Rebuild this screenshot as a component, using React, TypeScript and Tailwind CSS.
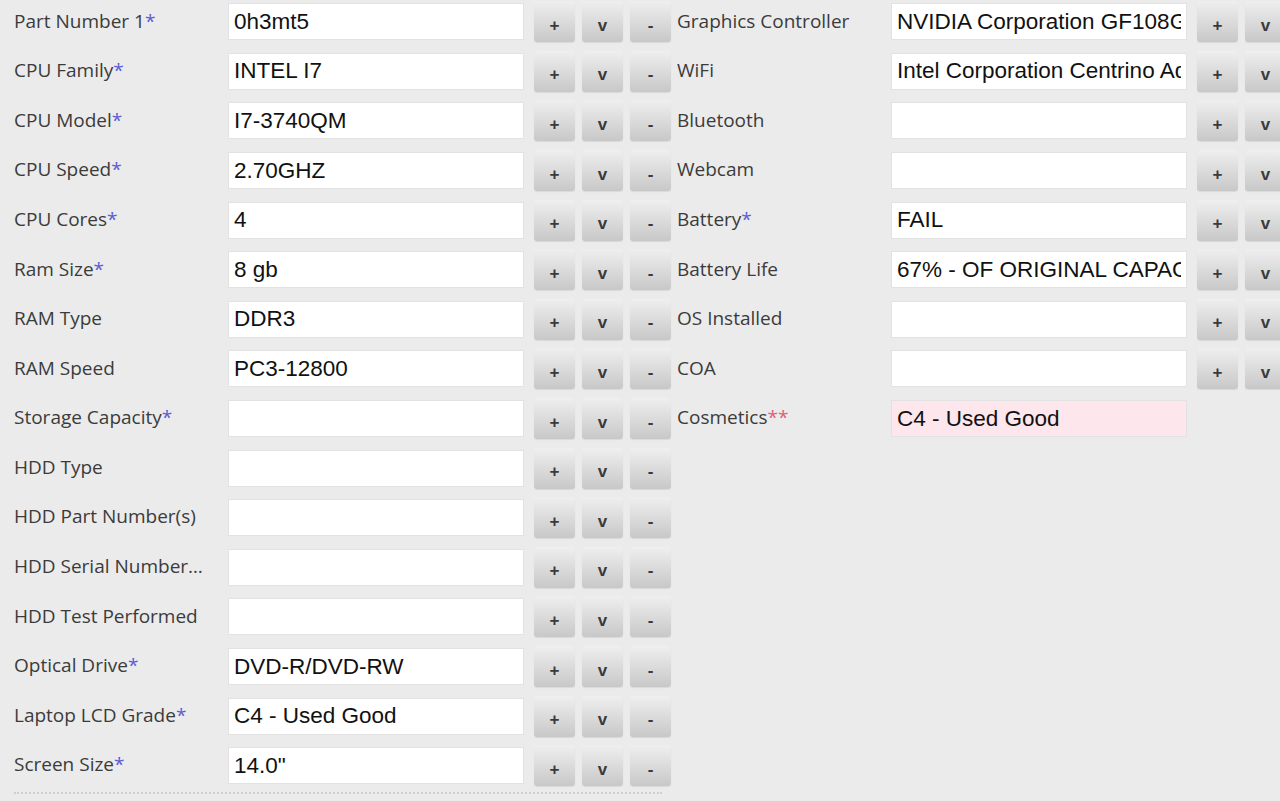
import React from "react";

type Field = {
  label: string;
  req?: "one" | "two";
  value?: string;
  pink?: boolean;
  noButtons?: boolean;
};

const leftFields: Field[] = [
  { label: "Part Number 1", req: "one", value: "0h3mt5" },
  { label: "CPU Family", req: "one", value: "INTEL I7" },
  { label: "CPU Model", req: "one", value: "I7-3740QM" },
  { label: "CPU Speed", req: "one", value: "2.70GHZ" },
  { label: "CPU Cores", req: "one", value: "4" },
  { label: "Ram Size", req: "one", value: "8 gb" },
  { label: "RAM Type", value: "DDR3" },
  { label: "RAM Speed", value: "PC3-12800" },
  { label: "Storage Capacity", req: "one", value: "" },
  { label: "HDD Type", value: "" },
  { label: "HDD Part Number(s)", value: "" },
  { label: "HDD Serial Number(s)", value: "" },
  { label: "HDD Test Performed", value: "" },
  { label: "Optical Drive", req: "one", value: "DVD-R/DVD-RW" },
  { label: "Laptop LCD Grade", req: "one", value: "C4 - Used Good" },
  { label: "Screen Size", req: "one", value: '14.0"' },
];

const rightFields: Field[] = [
  { label: "Graphics Controller", value: "NVIDIA Corporation GF108GLM [NVS 5200M]" },
  { label: "WiFi", value: "Intel Corporation Centrino Advanced-N 6205" },
  { label: "Bluetooth", value: "" },
  { label: "Webcam", value: "" },
  { label: "Battery", req: "one", value: "FAIL" },
  { label: "Battery Life", value: "67% - OF ORIGINAL CAPACITY" },
  { label: "OS Installed", value: "" },
  { label: "COA", value: "" },
  { label: "Cosmetics", req: "two", value: "C4 - Used Good", pink: true, noButtons: true },
];

function ActionButton({ glyph }: { glyph: string }) {
  return (
    <button
      type="button"
      className="flex h-[41px] w-[41px] shrink-0 items-center justify-center rounded-[3px] bg-gradient-to-b from-[#efefef] to-[#c8c8c8] pt-[7px] text-[17px] font-bold leading-none text-[#3a3a3a] shadow-[0_1px_1px_rgba(0,0,0,0.08)]"
      style={{ fontFamily: "'Liberation Sans', Arial, sans-serif" }}
    >
      {glyph}
    </button>
  );
}

function FieldRow({ f }: { f: Field }) {
  return (
    <div className="flex h-[49.6px] items-center">
      <div
        className="w-[192px] shrink-0 truncate pb-[2px] text-[19px] text-[#3b3b3b]"
        style={{ fontFamily: "'Open Sans', 'Noto Sans', sans-serif" }}
      >
        {f.label}
        {f.req === "one" && <span className="text-[#5b5bd6]">*</span>}
        {f.req === "two" && <span className="text-[#e0607c]">**</span>}
      </div>
      <div className="w-[22px] shrink-0" />
      <input
        readOnly
        value={f.value}
        className={`h-[37px] w-[296px] shrink-0 border border-[#e2e2e2] px-[5px] text-[22.5px] text-[#111] outline-none ${
          f.pink ? "bg-[#fde6ec]" : "bg-white"
        }`}
        style={{ fontFamily: "'Liberation Sans', Arial, sans-serif" }}
      />
      {!f.noButtons && (
        <div className="ml-[10px] flex shrink-0 gap-[7px]">
          <ActionButton glyph="+" />
          <ActionButton glyph="v" />
          <ActionButton glyph="-" />
        </div>
      )}
    </div>
  );
}

export default function App() {
  return (
    <div className="h-[801px] w-[1280px] overflow-hidden bg-[#ebebeb]">
      <div className="flex pl-[14px]">
        <div className="mt-[-3px] flex w-[663px] shrink-0 flex-col">
          {leftFields.map((f) => (
            <FieldRow key={f.label} f={f} />
          ))}
          <div className="mt-[1px] h-0 w-[648px] border-t-[2px] border-dotted border-[#cfcfcf]" />
        </div>
        <div className="mt-[-3px] flex shrink-0 flex-col">
          {rightFields.map((f) => (
            <FieldRow key={f.label} f={f} />
          ))}
        </div>
      </div>
    </div>
  );
}
